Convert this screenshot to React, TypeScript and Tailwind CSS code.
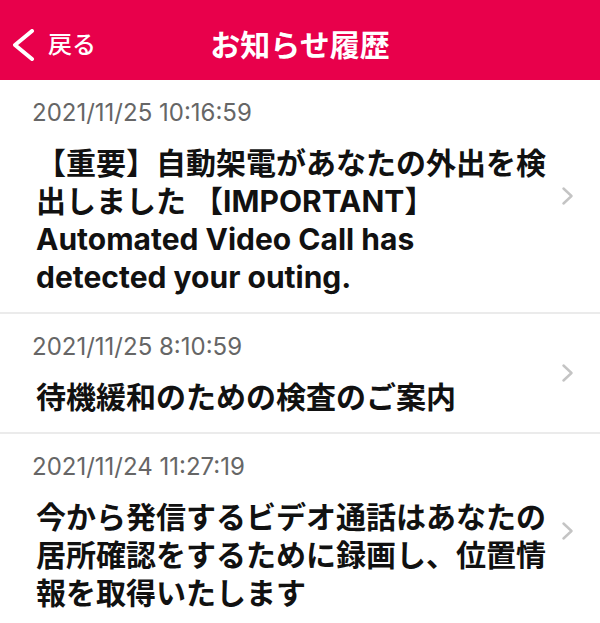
import type { FC } from 'react';

const notices = [
  {
    id: 1,
    date: '2021/11/25 10:16:59',
    title: '【重要】自動架電があなたの外出を検出しました 【IMPORTANT】 Automated Video Call has detected your outing.',
  },
  {
    id: 2,
    date: '2021/11/25 8:10:59',
    title: '待機緩和のための検査のご案内',
  },
  {
    id: 3,
    date: '2021/11/24 11:27:19',
    title: '今から発信するビデオ通話はあなたの居所確認をするために録画し、位置情報を取得いたします',
  },
] as const;

const font = { fontFamily: 'Inter, "Noto Sans CJK JP", sans-serif' };

const BackChevron: FC = () => (
  <svg width="23" height="32" viewBox="0 0 23 32" fill="none">
    <polyline points="19,2 2,16 19,30" stroke="white" strokeWidth="4" strokeLinecap="round" strokeLinejoin="round" />
  </svg>
);

const RowChevron: FC = () => (
  <svg width="11" height="18" viewBox="0 0 11 18" fill="none">
    <polyline points="1.5,1.5 9.5,9 1.5,16.5" stroke="#c4c4c4" strokeWidth="2.4" strokeLinecap="round" strokeLinejoin="round" />
  </svg>
);

export default function App() {
  return (
    <div className="h-[623px] w-[600px] overflow-hidden bg-white" style={font}>
      <header className="grid h-[80px] grid-cols-[1fr_auto_1fr] items-center bg-[#e8004b] pt-[10px] text-white">
        <div className="flex items-center gap-[12px] pl-[13px]">
          <BackChevron />
          <span className="text-[24px] font-medium leading-none">戻る</span>
        </div>
        <h1 className="text-[30px] font-bold leading-none">お知らせ履歴</h1>
        <div />
      </header>

      <ul>
        {notices.map((n) => (
          <li key={n.id} className="flex items-center border-b-2 border-[#ebebeb] pl-[32px]">
            <div className="pt-[19px] pb-[16px]">
              <div className="text-[24px] leading-[28px] text-[#666]">{n.date}</div>
              <div className="mt-[17px] ml-[4px] w-[515px] text-[30px] font-bold leading-[38px] text-[#111]">
                {n.title}
              </div>
            </div>
            <div className="ml-[11px]">
              <RowChevron />
            </div>
          </li>
        ))}
      </ul>
    </div>
  );
}
